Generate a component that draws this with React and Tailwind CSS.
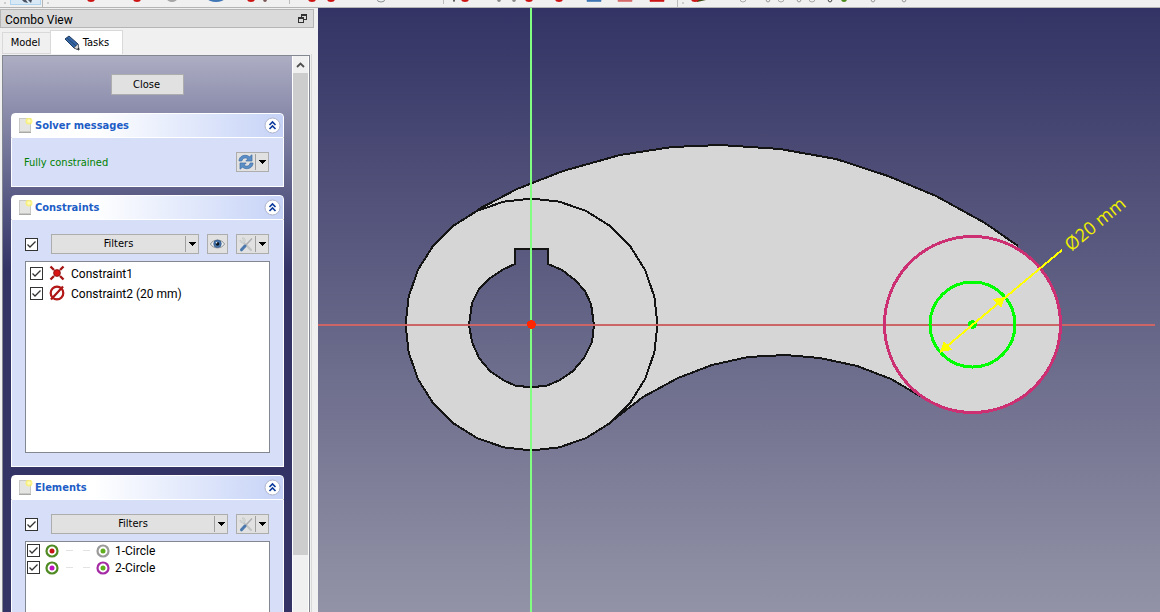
import { useState } from "react";

const SketchIcon = () => (
  <svg width="16" height="16" viewBox="0 0 16 16">
    <path d="M1 4 L5 1 L14 9 L15 15 L10 13 Z" fill="#3465a4" stroke="#1f3a5f" />
    <path d="M3 3 L12 11" stroke="#25456f" strokeWidth="1" />
    <path d="M10 13 L14 9 L15 15 Z" fill="#d8d8d8" stroke="#555" strokeWidth=".6" />
    <path d="M13 14 L15 12.5 V15 Z" fill="#222" />
  </svg>
);

const FloatIcon = () => (
  <svg width="9" height="9" viewBox="0 0 9 9" shapeRendering="crispEdges">
    <path d="M3 3 V0.5 H8.5 V5.5 H6" fill="none" stroke="#333" />
    <path d="M3 1 H9" stroke="#333" strokeWidth="2" />
    <rect x="0.5" y="3.5" width="5" height="5" fill="#dadada" stroke="#333" />
    <path d="M0 4 H6" stroke="#333" strokeWidth="2" />
  </svg>
);

const DocIcon = () => (
  <svg width="14" height="15" viewBox="0 0 14 15" className="shrink-0">
    <rect x="0.5" y="0.5" width="11" height="13" fill="#e4e4e2" stroke="#c9c9c6" />
    <path d="M0 14.5 H12" stroke="#a9a9a5" />
    <circle cx="10" cy="3" r="3.5" fill="#fbf16a" opacity=".8" />
    <circle cx="10" cy="3" r="1.8" fill="#fffbb8" />
  </svg>
);

const Chevrons = () => (
  <svg width="17" height="17" viewBox="0 0 17 17" className="block">
    <circle cx="8.5" cy="8.5" r="7.5" fill="#fff" stroke="#b0b5cc" />
    <path
      d="M5.5 8 L8.5 5 L11.5 8 M5.5 12 L8.5 9 L11.5 12"
      fill="none"
      stroke="#0c3a9c"
      strokeWidth="1.6"
    />
  </svg>
);

const RefreshIcon = () => (
  <svg width="16" height="16" viewBox="0 0 16 16">
    <path
      d="M1 7 C1 2 7 -0.5 11.5 2.8 L14 0.8 V7 H7.8 L10 4.8 C7.5 3 4.5 4 3.8 7 Z"
      fill="#5b8fc7"
      stroke="#3f6da5"
      strokeWidth=".7"
    />
    <path
      d="M15 9 C15 14 9 16.5 4.5 13.2 L2 15.2 V9 H8.2 L6 11.2 C8.5 13 11.5 12 12.2 9 Z"
      fill="#5b8fc7"
      stroke="#3f6da5"
      strokeWidth=".7"
    />
  </svg>
);

const EyeIcon = () => (
  <svg width="15" height="12" viewBox="0 0 16 12">
    <path
      d="M0.5 6 C3.5 0.5 12.5 0.5 15.5 6 C12.5 11.5 3.5 11.5 0.5 6 Z"
      fill="#eef1f3"
      stroke="#85898c"
    />
    <circle cx="8" cy="5.8" r="4" fill="#4777ad" stroke="#2f5687" strokeWidth=".8" />
    <circle cx="8" cy="5.8" r="2" fill="#0b1522" />
    <circle cx="7" cy="4.6" r=".8" fill="#fff" />
  </svg>
);

const ToolsIcon = () => (
  <svg width="15" height="15" viewBox="0 0 15 15">
    <path d="M5 6 L12 13" stroke="#c4c6c6" strokeWidth="2.4" strokeLinecap="round" />
    <path
      d="M1 3 L3 4.5 L4.5 3 L3 1 C5 0.3 7 2 6 4.5 L4.5 6 C2.5 6.5 0.6 5 1 3 Z"
      fill="#d7d9d9"
      stroke="#bfc2c2"
      strokeWidth=".6"
    />
    <path d="M6.500 8.500 L13 1.500" stroke="#a9adaf" strokeWidth="1.4" />
    <path d="M2.5 12.8 L6 9" stroke="#4b79ae" strokeWidth="3" strokeLinecap="round" />
  </svg>
);

const DownArrow = () => (
  <svg width="7" height="4" viewBox="0 0 7 4" shapeRendering="crispEdges">
    <path d="M0 0 H7 L3.5 4 Z" fill="#000" />
  </svg>
);

const CoincidentIcon = () => (
  <svg width="16" height="16" viewBox="0 0 16 16">
    <path
      d="M1.5 1.5 L5 5 M14.5 1.5 L11 5 M1.5 14.5 L5 11 M14.5 14.5 L11 11"
      stroke="#a51515"
      strokeWidth="2.4"
    />
    <circle cx="8" cy="8" r="3.4" fill="#d91414" stroke="#7d0b0b" strokeWidth=".8" />
  </svg>
);

const DiameterIcon = () => (
  <svg width="16" height="16" viewBox="0 0 16 16">
    <circle cx="8" cy="8" r="6.3" fill="none" stroke="#a81212" strokeWidth="2.2" />
    <path d="M2 14.5 L14 1.5" stroke="#a81212" strokeWidth="2.2" />
    <circle cx="8" cy="8" r="6.3" fill="none" stroke="#d02424" strokeWidth=".6" />
  </svg>
);

const RingIcon = ({ ring, dot }) => (
  <svg width="14" height="14" viewBox="0 0 14 14">
    <circle cx="7" cy="7" r="5.5" fill="#fff" stroke={ring} strokeWidth="2.2" />
    <circle cx="7" cy="7" r="2.5" fill={dot} />
  </svg>
);

const Checkbox = ({ label, className = "" }) => {
  const [checked, setChecked] = useState(true);
  return (
    <span className={`relative block w-[13px] h-[13px] shrink-0 ${className}`}>
      <input
        type="checkbox"
        aria-label={label}
        checked={checked}
        onChange={(e) => setChecked(e.target.checked)}
        className="block appearance-none w-[13px] h-[13px] bg-white border border-[#333]"
      />
      {checked && (
        <svg
          className="absolute inset-0 pointer-events-none"
          width="13"
          height="13"
          viewBox="0 0 13 13"
        >
          <path d="M2.5 6.5 L5 9 L10.5 3.5" fill="none" stroke="#333" strokeWidth="1.3" />
        </svg>
      )}
    </span>
  );
};

// Button with a separate drop-down arrow on its right edge
const MenuButton = ({ label, children, className = "" }) => (
  <button
    aria-label={label}
    className={`flex items-stretch h-5 bg-[#e1e1e1] border border-[#adadad] ${className}`}
  >
    <span className="flex-1 flex items-center justify-center">{children}</span>
    <span className="my-px w-[13px] flex items-center justify-center border-l border-[#a0a0a0]">
      <DownArrow />
    </span>
  </button>
);

const TaskBox = ({ title, children }) => (
  <section className="shrink-0">
    <header className="h-[25px] flex items-center pl-[7px] pr-0.5 rounded-t border border-white bg-linear-to-r from-white from-30% to-[#c6d3f7]">
      <DocIcon />
      <h2 className="ml-0.5 pt-px flex-1 font-bold text-[#215dc6]">{title}</h2>
      <button aria-label={`Collapse ${title}`}>
        <Chevrons />
      </button>
    </header>
    <div className="px-[13px] pt-3.5 bg-[#d6dff7] border-x border-b border-white">
      {children}
    </div>
  </section>
);

const constraints = [
  { name: "Constraint1", Icon: CoincidentIcon },
  { name: "Constraint2 (20 mm)", Icon: DiameterIcon },
];

const elements = [
  { name: "1-Circle", dot: "#c81414", ring: "#9a9a9a" },
  { name: "2-Circle", dot: "#c014c0", ring: "#a52ba5" },
];

// Lower edges of the toolbar icons, in window order
const toolbarIcons = [
  { x: 91, color: "#cc1414" },
  { x: 137, color: "#cc1414" },
  { x: 172, color: "#a5a5a5", w: 10 },
  { x: 216, color: "#4176b5", w: 16 },
  { x: 251, color: "#cc1414" },
  { x: 265, color: "#7a5555", w: 4 },
  { x: 289, sep: true },
  { x: 312, color: "#cc1414" },
  { x: 331, color: "#cc1414" },
  { x: 381, color: "#8a9494", hollow: true, w: 8 },
  { x: 443, sep: true },
  { x: 454, color: "#444", w: 2 },
  { x: 465, color: "#cc1414" },
  { x: 499, color: "#888", w: 4 },
  { x: 514, color: "#888", w: 4 },
  { x: 529, color: "#cc1414" },
  { x: 559, color: "#cc1414" },
  { x: 594, color: "#3f75b3", w: 14, flat: true },
  { x: 625, color: "#d66a6a", w: 14, flat: true },
  { x: 657, color: "#cc1414", w: 14, flat: true },
  { x: 677, sep: true },
  { x: 743, color: "#aaa", hollow: true, w: 6 },
  { x: 768, color: "#999", hollow: true, w: 4 },
  { x: 781, color: "#aaa", hollow: true, w: 6 },
  { x: 799, color: "#999", hollow: true, w: 4 },
  { x: 812, color: "#aaa", hollow: true, w: 6 },
  { x: 830, color: "#444", hollow: true, w: 4 },
  { x: 844, color: "#4b8a1c", w: 6 },
  { x: 873, color: "#999", hollow: true, w: 4 },
  { x: 904, color: "#999", hollow: true, w: 4 },
];

const ToolBar = () => (
  <div className="h-2 shrink-0 overflow-hidden bg-[#f0f0f0] border-b border-[#b4b4b4]">
    <svg width="920" height="7" viewBox="0 0 920 7" className="block">
      <rect x="10.5" y="-5" width="30" height="9.5" fill="#d8e8f5" stroke="#aed4f0" />
      <path d="M22 0 L26 0 L28 3 L24 2 Z M28 0 H32 L31 3 Z" fill="#4a5260" />
      <path d="M4 3 H6 M47 3 H49 M682 3 H684" stroke="#aaa" strokeWidth="1" />
      <path d="M42.5 0 V7" stroke="#b5b5b5" />
      {toolbarIcons.map(({ x, color, sep, hollow, flat, w = 8 }) => {
        if (sep) return <path key={x} d={`M${x + 0.5} 0 V${x === 677 ? 7 : 4}`} stroke="#bcbcbc" />;
        if (flat)
          return (
            <path
              key={x}
              d={`M${x - w / 2} -1 V1.5 H${x + w / 2} V-1 Z`}
              fill={color}
              stroke={color}
              strokeOpacity=".6"
            />
          );
        return (
          <ellipse
            key={x}
            cx={x}
            cy="-1"
            rx={w / 2}
            ry="3"
            fill={hollow ? "none" : color}
            stroke={hollow ? color : "none"}
          />
        );
      })}
      <path d="M696 0 H706 L697 2 Z" fill="#3c4a10" />
      <ellipse cx="695" cy="-1" rx="4" ry="3" fill="#cc1414" />
    </svg>
  </div>
);

const polygonPoints = (cx, cy, r, sides = 28) =>
  Array.from({ length: sides }, (_, i) => {
    const a = (i * 2 * Math.PI) / sides;
    return `${(cx + r * Math.cos(a)).toFixed(1)},${(cy - r * Math.sin(a)).toFixed(1)}`;
  }).join(" ");

const Scene = () => (
  <svg
    className="block w-full h-full"
    viewBox="318 8 842 604"
    preserveAspectRatio="xMinYMin slice"
    shapeRendering="crispEdges"
  >
    <defs>
      <linearGradient id="sky" gradientUnits="userSpaceOnUse" x1="0" y1="8" x2="0" y2="612">
        <stop offset="0" stopColor="#333365" />
        <stop offset="1" stopColor="#9393a7" />
      </linearGradient>
    </defs>
    <rect x="318" y="8" width="842" height="604" fill="url(#sky)" />

    {/* Lever body */}
    <path
      d="M465 218 L477 210 L517 189 L563 171 L620 155 L672 147 L720 145 L780 149 L836 159 L888 176 L936 196 L985 223 L1018 246 L1010 390 L920 396 L891 379 L857 366 L820 358 L785 355 L748 357 L712 365 L678 378 L643 397 L612 421 Z"
      fill="#d6d6d6"
    />
    <circle cx="972.5" cy="324.5" r="88" fill="#d6d6d6" />
    <g stroke="#141414" strokeWidth="2" fill="none">
      <polygon points={polygonPoints(531.5, 324.5, 126)} fill="#d6d6d6" />
      <path d="M477 210 L517 189 L563 171 L620 155 L672 147 L720 145 L780 149 L836 159 L888 176 L936 196 L985 223 L1018 246" />
      <path d="M920 396 L891 379 L857 366 L820 358 L785 355 L748 357 L712 365 L678 378 L643 397 L612 421" />
      <path
        d="M515 264 V249 H548 V264 L562 270 L575 280 L585 291 L591 304 L594 325 L592 342 L584 358 L573 371 L560 380 L546 386 L531 387 L516 386 L503 380 L490 371 L479 358 L472 342 L469 325 L472 303 L479 289 L489 279 L502 270 Z"
        fill="url(#sky)"
      />
    </g>

    {/* Axes */}
    <path d="M318 325 H1155" stroke="#cc6666" strokeWidth="2" />
    <path d="M531 8 V612" stroke="#80ff80" strokeWidth="2" />
    <circle cx="531.5" cy="324.5" r="4.5" fill="#ff2600" />

    {/* Sketch geometry */}
    <circle cx="972.5" cy="324.5" r="88" fill="none" stroke="#cc3073" strokeWidth="3" />
    <circle cx="972.5" cy="324.5" r="42.5" fill="none" stroke="#00ff00" strokeWidth="3" />
    <circle cx="972.5" cy="324.5" r="4.5" fill="#00ff00" />

    {/* Diameter dimension */}
    <g fill="#ffff00">
      <path d="M940 352 L1062 250" stroke="#ffff00" strokeWidth="2" />
      <path d="M940 352 L944 341 L952 350 Z" />
      <path d="M1005 297 L993 299 L1001 308 Z" />
      <text
        transform="translate(1071 252) rotate(-39.5)"
        className="font-['Open_Sans',sans-serif] text-[18px]"
        fill="#f0f000"
      >
        Ø20 mm
      </text>
    </g>
  </svg>
);

const ComboView = () => (
  <aside className="w-[318px] shrink-0 flex flex-col pt-px bg-[#f0f0f0]">
    <div className="mr-1 h-[19px] shrink-0 flex items-center justify-between pl-1 pr-1.5 bg-[#dadada] border border-[#b5b5b5]">
      <h1 className="pt-0.5 font-[Roboto,sans-serif] text-xs">Combo View</h1>
      <button aria-label="Float panel">
        <FloatIcon />
      </button>
    </div>

    <div role="tablist" className="shrink-0 flex items-end h-[26px] pl-0.5 mr-[7px]">
      <button
        role="tab"
        aria-selected="false"
        className="w-12 h-[22px] pr-0.5 border border-r-0 border-[#d9d9d9]"
      >
        Model
      </button>
      <button
        role="tab"
        aria-selected="true"
        className="w-[73px] h-6 flex items-center justify-center gap-[3px] bg-white border border-b-0 border-[#d9d9d9]"
      >
        <SketchIcon />
        Tasks
      </button>
    </div>

    <div className="flex-1 min-h-0 ml-0.5 mr-1.5 pt-px pr-px border-r border-[#d9d9d9]">
      <div className="h-full flex bg-white border-l border-t border-r border-[#828790]">
        <div className="flex-1 h-full overflow-hidden flex flex-col gap-2 px-2 pt-[18px] bg-[#333366] bg-linear-to-b from-[#adadc3] to-[#333366] to-[215px]">
          <button className="self-center shrink-0 w-[73px] h-[21px] mb-2.5 pr-0.5 bg-[#e1e1e1] border border-[#adadad]">
            Close
          </button>

          <TaskBox title="Solver messages">
            <div className="flex items-center justify-between pb-3.5 pr-px">
              <p className="-ml-px pt-0.5 text-[#008000]">Fully constrained</p>
              <MenuButton label="Update" className="w-[33px]">
                <RefreshIcon />
              </MenuButton>
            </div>
          </TaskBox>

          <TaskBox title="Constraints">
            <div className="flex items-center gap-2 pr-px">
              <Checkbox label="Filter constraints" className="mr-[5px]" />
              <MenuButton className="flex-1">Filters</MenuButton>
              <button
                aria-label="Show or hide constraints"
                className="w-[21px] h-5 flex items-center justify-center bg-[#e1e1e1] border border-[#adadad]"
              >
                <EyeIcon />
              </button>
              <MenuButton label="Settings" className="w-[33px]">
                <ToolsIcon />
              </MenuButton>
            </div>
            <ul className="mt-[7px] mb-[13px] h-[192px] py-px px-1 bg-white border border-[#828790] font-[Roboto,sans-serif] text-xs">
              {constraints.map(({ name, Icon }) => (
                <li key={name} className="flex items-center h-5">
                  <Checkbox label={name} />
                  <span className="mx-1.5">
                    <Icon />
                  </span>
                  <span className="pt-px">{name}</span>
                </li>
              ))}
            </ul>
          </TaskBox>

          <TaskBox title="Elements">
            <div className="flex items-center gap-2 pr-px">
              <Checkbox label="Filter elements" className="mr-[5px]" />
              <MenuButton className="flex-1">Filters</MenuButton>
              <MenuButton label="Settings" className="w-[33px]">
                <ToolsIcon />
              </MenuButton>
            </div>
            <ul className="mt-[7px] h-[192px] px-px bg-white border border-[#828790] font-[Roboto,sans-serif] text-xs">
              {elements.map(({ name, dot, ring }) => (
                <li key={name} className="flex items-center h-[17px]">
                  <Checkbox label={name} />
                  <span className="ml-[5px]">
                    <RingIcon ring="#4f8a22" dot={dot} />
                  </span>
                  <span className="ml-[7px] w-[7px] h-px bg-[#e3e3e3]"></span>
                  <span className="ml-2.5 mr-1.5 w-[7px] h-px bg-[#e3e3e3]"></span>
                  <RingIcon ring={ring} dot="#5fae1e" />
                  <span className="ml-[5px]">{name}</span>
                </li>
              ))}
            </ul>
          </TaskBox>
        </div>

        {/* Scroll bar */}
        <div className="w-[17px] shrink-0 flex flex-col px-px bg-white">
          <button
            aria-label="Scroll up"
            className="h-[17px] shrink-0 flex items-center justify-center bg-[#f0f0f0]"
          >
            <svg width="9" height="6" viewBox="0 0 9 6">
              <path d="M1 5 L4.5 1.5 L8 5" fill="none" stroke="#505050" strokeWidth="1.8" />
            </svg>
          </button>
          <div className="flex-1 bg-[#f0f0f0]">
            <div className="h-[89.5%] bg-[#cdcdcd]"></div>
          </div>
        </div>
      </div>
    </div>
  </aside>
);

const App = () => {
  return (
    <div className="h-screen flex flex-col overflow-hidden font-['DejaVu_Sans_Condensed','DejaVu_Sans',sans-serif] text-[11px] leading-4 text-black">
      <ToolBar />
      <div className="flex-1 min-h-0 flex">
        <ComboView />
        <main className="flex-1 min-w-0">
          <Scene />
        </main>
      </div>
    </div>
  );
};

export default App;
